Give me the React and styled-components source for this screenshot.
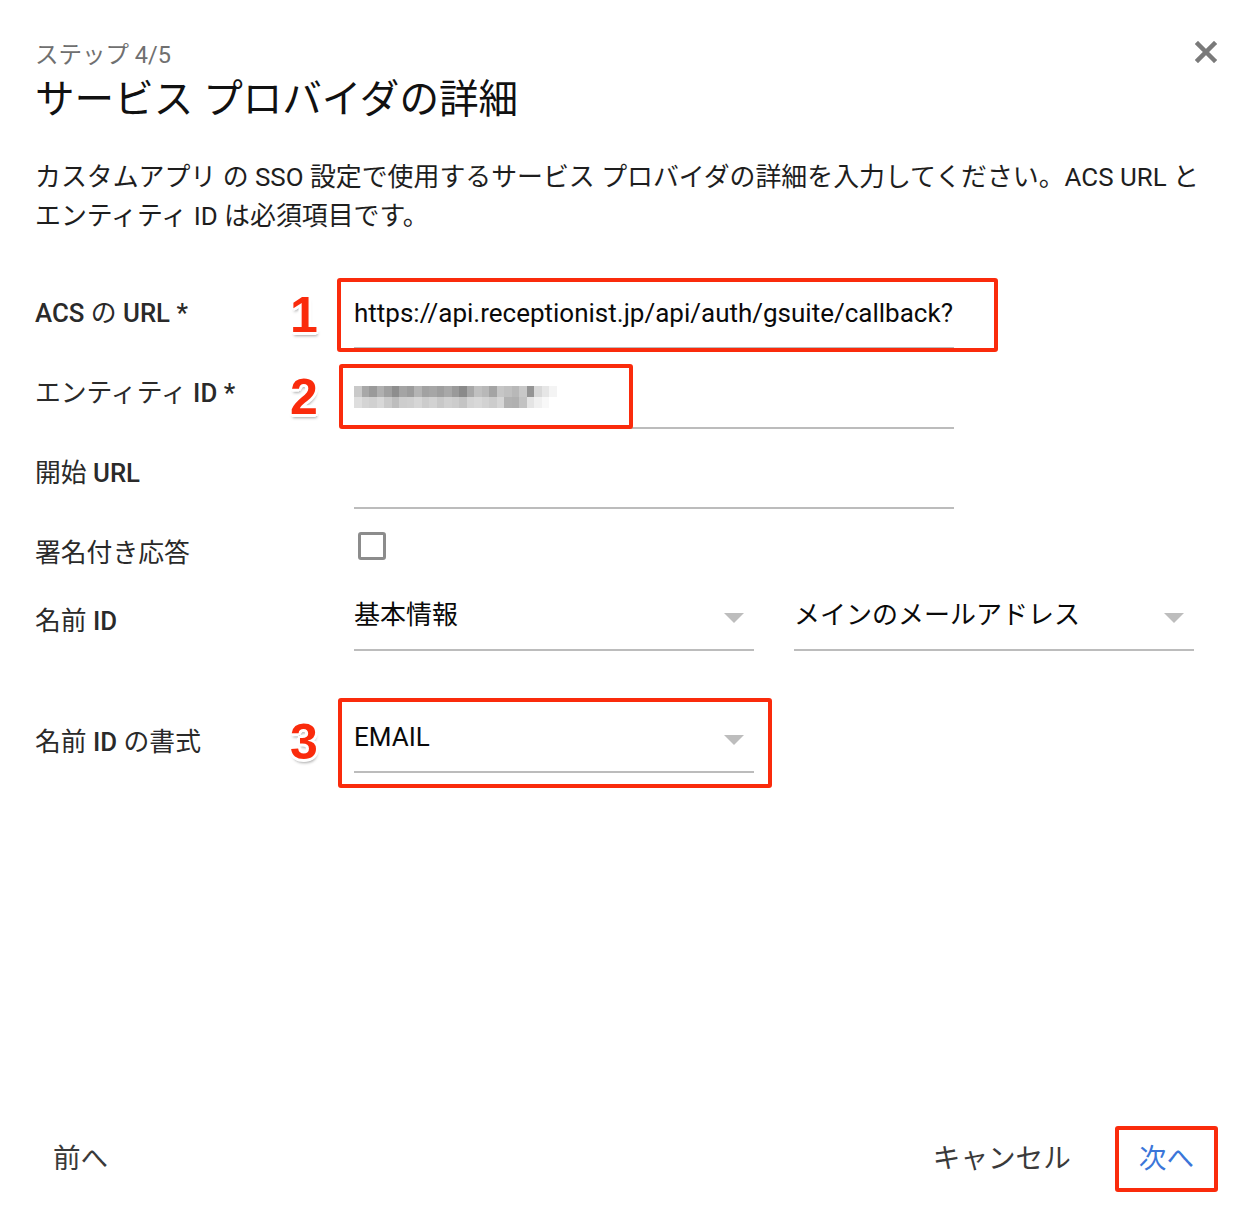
import React from "react";
import styled, { createGlobalStyle } from "styled-components";

const GlobalStyle = createGlobalStyle`
  html, body {
    margin: 0;
    padding: 0;
    background: #ffffff;
  }
  body {
    font-family: Roboto, "Noto Sans CJK JP", sans-serif;
    color: #212121;
  }
  * {
    box-sizing: border-box;
  }
`;

const RED = "#fa2b0c";

const Page = styled.div`
  width: 1256px;
  height: 1216px;
  padding: 40px 38px 0 35px;
  display: flex;
  flex-direction: column;
`;

const Header = styled.header`
  display: flex;
  justify-content: space-between;
  align-items: flex-start;
`;

const Titles = styled.div`
  display: flex;
  flex-direction: column;
`;

const Step = styled.div`
  font-size: 23.5px;
  line-height: 30px;
  color: #707070;
`;

const Title = styled.h1`
  margin: 5px 0 0;
  font-size: 39.6px;
  line-height: 50px;
  font-weight: 400;
  color: #111;
`;

const CloseButton = styled.button`
  margin: 0;
  padding: 0;
  border: 0;
  background: none;
  width: 24px;
  height: 24px;
  display: flex;
  align-items: center;
  justify-content: center;
  cursor: pointer;
`;

const Description = styled.p`
  margin: 33px 0 0;
  font-size: 25.9px;
  line-height: 39px;
  color: #1e1e1e;
  white-space: nowrap;
`;

const Form = styled.div`
  margin-top: 57px;
  display: flex;
  flex-direction: column;
  gap: 24px;
`;

const Row = styled.div`
  display: grid;
  grid-template-columns: 319px 1fr;
  align-items: start;
  margin-top: ${(p) => p.$offset || 0}px;
`;

const LabelCell = styled.div`
  display: flex;
  justify-content: space-between;
  align-items: flex-start;
  padding-top: ${(p) => p.$shift || 0}px;
`;

const Label = styled.div`
  font-size: 25.8px;
  line-height: 40px;
  color: #2a2a2a;
`;

const Em = styled.span`
  font-weight: 500;
`;

const Badge = styled.div`
  width: 40px;
  margin-right: 30px;
  text-align: center;
  font-family: "Liberation Sans", Arial, sans-serif;
  font-weight: 700;
  font-size: 50px;
  line-height: 40px;
  color: ${RED};
  text-shadow:
    -3px 0 0 #fff, 3px 0 0 #fff, 0 -3px 0 #fff, 0 3px 0 #fff,
    -2px -2px 0 #fff, 2px -2px 0 #fff, -2px 2px 0 #fff, 2px 2px 0 #fff,
    1px 4px 3px rgba(0, 0, 0, 0.35);
  margin-top: ${(p) => p.$shift || 0}px;
`;

const FieldCell = styled.div`
  position: relative;
  display: flex;
  gap: 40px;
`;

const Field = styled.div`
  width: ${(p) => p.$width}px;
  height: 56px;
  padding-bottom: 14px;
  border-bottom: 2px solid #bcbcbc;
  display: flex;
  align-items: center;
  justify-content: space-between;
  font-size: 26px;
  line-height: 40px;
  color: #0a0a0a;
  white-space: nowrap;
`;

const Value = styled.span`
  flex: 0 1 auto;
  overflow: hidden;
`;

const Arrow = styled.span`
  width: 0;
  height: 0;
  margin-right: 10px;
  margin-top: 6px;
  border-left: 10px solid transparent;
  border-right: 10px solid transparent;
  border-top: 10px solid #bdbdbd;
`;

const Highlight = styled.div`
  position: absolute;
  left: ${(p) => p.$left}px;
  top: ${(p) => p.$top}px;
  width: ${(p) => p.$w}px;
  height: ${(p) => p.$h}px;
  border: 4px solid ${RED};
  border-radius: 3px;
  pointer-events: none;
`;

const Mosaic = styled.div`
  display: grid;
  grid-template-columns: repeat(28, 7.5px);
  grid-auto-rows: 11px;
  margin-top: 8px;
`;

const Tile = styled.span`
  background: ${(p) => p.$shade};
`;

const Checkbox = styled.span`
  display: block;
  width: 28px;
  height: 28px;
  margin-left: 4px;
  margin-top: -1px;
  border: 3px solid #8c8c8c;
  border-radius: 3px;
`;

const CheckRow = styled(Row)`
  height: 38px;
`;

const Footer = styled.footer`
  margin-top: auto;
  margin-bottom: 24px;
  display: flex;
  align-items: center;
`;

const Spacer = styled.div`
  flex: 1;
`;

const TextButton = styled.button`
  margin: 0;
  padding: 0 ${(p) => (p.$highlight ? 20 : 18)}px;
  height: 66px;
  background: none;
  border: ${(p) => (p.$highlight ? `4px solid ${RED}` : "0")};
  border-radius: 3px;
  font-family: Roboto, "Noto Sans CJK JP", sans-serif;
  font-size: 27.6px;
  line-height: 40px;
  color: ${(p) => (p.$primary ? "#3b76d9" : "#3a3a3a")};
  cursor: pointer;
  margin-left: ${(p) => p.$gap || 0}px;
`;

const topShades = [
  "#c9c9c9", "#a8a8a8", "#9a9a9a", "#b0b0b0", "#a0a0a0", "#8e8e8e", "#a4a4a4", "#9c9c9c",
  "#b4b4b4", "#a2a2a2", "#a6a6a6", "#9e9e9e", "#a8a8a8", "#9a9a9a", "#8a8a8a", "#a8a8a8",
  "#c0c0c0", "#b8b8b8", "#a4a4a4", "#c6c6c6", "#c0c0c0", "#b8b8b8", "#c8c8c8", "#949494",
  "#d8d8d8", "#e6e6e6", "#f4f4f4", "#ffffff",
];
const bottomShades = [
  "#dedede", "#d4d4d4", "#d0d0d0", "#d8d8d8", "#cacaca", "#bdbdbd", "#cdcdcd", "#cfcfcf",
  "#d6d6d6", "#cccccc", "#d2d2d2", "#c8c8c8", "#d0d0d0", "#cccccc", "#c4c4c4", "#d4d4d4",
  "#d8d8d8", "#d2d2d2", "#cccccc", "#d6d6d6", "#b2b2b2", "#b0b0b0", "#c2c2c2", "#e4e4e4",
  "#f0f0f0", "#f8f8f8", "#ffffff", "#ffffff",
];

const CloseIcon = () => (
  <svg width="22" height="22" viewBox="0 0 22 22">
    <path d="M3 3 L19 19 M19 3 L3 19" stroke="#7a7a7a" strokeWidth="4.5" strokeLinecap="square" />
  </svg>
);

const Select = ({ width, value }) => (
  <Field $width={width}>
    <Value>{value}</Value>
    <Arrow />
  </Field>
);

export default function App() {
  return (
    <>
      <GlobalStyle />
      <Page>
        <Header>
          <Titles>
            <Step>ステップ 4/5</Step>
            <Title>サービス プロバイダの詳細</Title>
          </Titles>
          <CloseButton aria-label="閉じる">
            <CloseIcon />
          </CloseButton>
        </Header>

        <Description>
          カスタムアプリ の SSO 設定で使用するサービス プロバイダの詳細を入力してください。ACS URL と
          <br />
          エンティティ ID は必須項目です。
        </Description>

        <Form>
          <Row>
            <LabelCell>
              <Label>
                <Em>ACS</Em> の <Em>URL *</Em>
              </Label>
              <Badge $shift={2}>1</Badge>
            </LabelCell>
            <FieldCell>
              <Field $width={600}>
                <Value>https://api.receptionist.jp/api/auth/gsuite/callback?</Value>
              </Field>
              <Highlight $left={-17} $top={-15} $w={661} $h={74} />
            </FieldCell>
          </Row>

          <Row>
            <LabelCell>
              <Label>
                エンティティ <Em>ID *</Em>
              </Label>
              <Badge $shift={4}>2</Badge>
            </LabelCell>
            <FieldCell>
              <Field $width={600}>
                <Mosaic>
                  {topShades.map((s, i) => (
                    <Tile key={"t" + i} $shade={s} />
                  ))}
                  {bottomShades.map((s, i) => (
                    <Tile key={"b" + i} $shade={s} />
                  ))}
                </Mosaic>
              </Field>
              <Highlight $left={-15} $top={-9} $w={294} $h={65} />
            </FieldCell>
          </Row>

          <Row>
            <LabelCell>
              <Label>
                開始 <Em>URL</Em>
              </Label>
            </LabelCell>
            <FieldCell>
              <Field $width={600} />
            </FieldCell>
          </Row>

          <CheckRow>
            <LabelCell>
              <Label>署名付き応答</Label>
            </LabelCell>
            <FieldCell>
              <Checkbox role="checkbox" aria-checked="false" />
            </FieldCell>
          </CheckRow>

          <Row>
            <LabelCell $shift={6}>
              <Label>
                名前 <Em>ID</Em>
              </Label>
            </LabelCell>
            <FieldCell>
              <Select width={400} value="基本情報" />
              <Select width={400} value="メインのメールアドレス" />
            </FieldCell>
          </Row>

          <Row $offset={42}>
            <LabelCell $shift={5}>
              <Label>
                名前 <Em>ID</Em> の書式
              </Label>
              <Badge>3</Badge>
            </LabelCell>
            <FieldCell>
              <Select width={400} value="EMAIL" />
              <Highlight $left={-16} $top={-19} $w={434} $h={90} />
            </FieldCell>
          </Row>
        </Form>

        <Footer>
          <TextButton>前へ</TextButton>
          <Spacer />
          <TextButton>キャンセル</TextButton>
          <TextButton $primary $highlight $gap={26}>
            次へ
          </TextButton>
        </Footer>
      </Page>
    </>
  );
}
